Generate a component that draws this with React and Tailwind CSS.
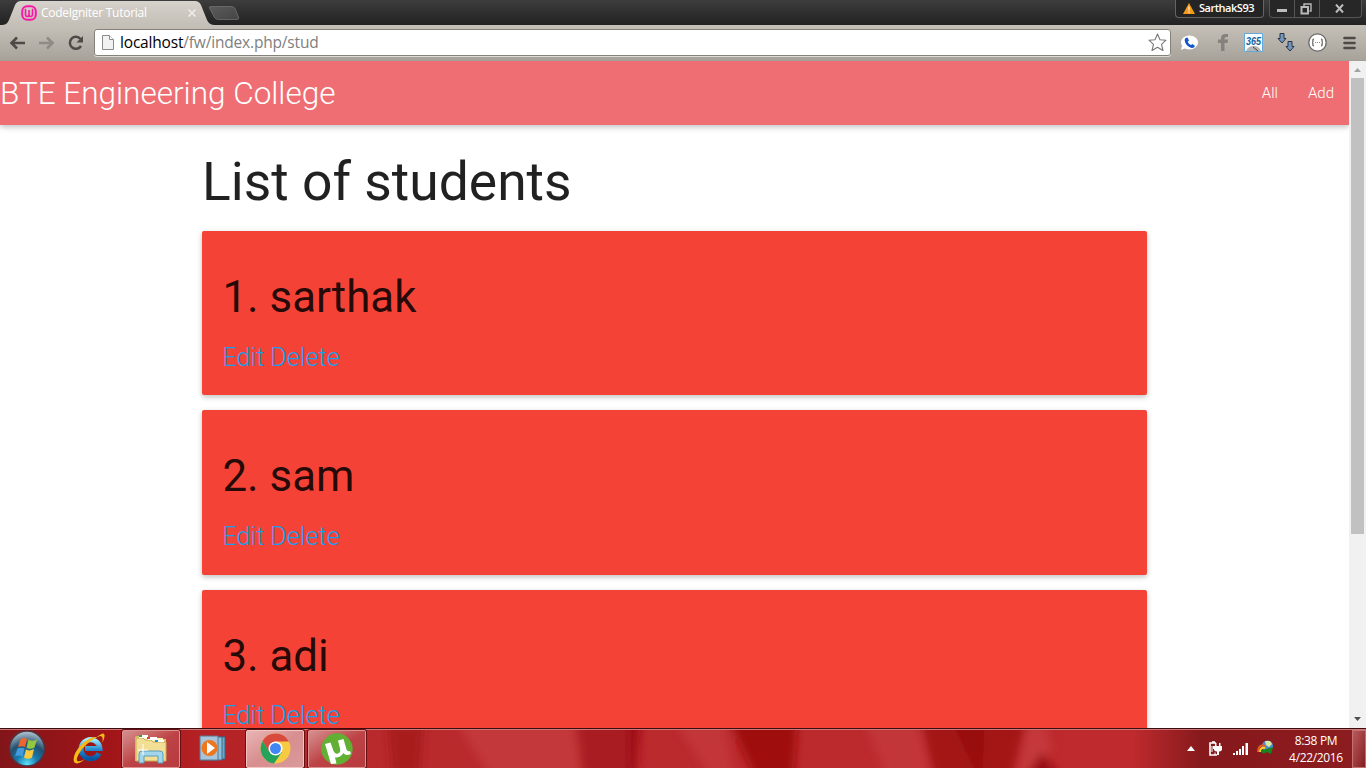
import React from "react";

const students = ["1. sarthak", "2. sam", "3. adi"];

function TabStrip() {
  return (
    <div className="relative h-[25px] shrink-0 bg-gradient-to-b from-[#3d3d3d] to-[#222222]">
      <svg className="absolute left-0 top-0" width="245" height="25" viewBox="0 0 245 25">
        <defs>
          <linearGradient id="tab" x1="0" y1="0" x2="0" y2="1">
            <stop offset="0" stopColor="#d6d2cc" />
            <stop offset="1" stopColor="#c4bfb6" />
          </linearGradient>
          <linearGradient id="newTab" x1="0" y1="0" x2="1" y2="1">
            <stop offset="0" stopColor="#5c5c5c" />
            <stop offset="1" stopColor="#444" />
          </linearGradient>
        </defs>
        <path d="M0 25C6 25 7 24 9 20L15 5Q17 1 21 1H195Q199 1 201 5L207 20Q209 25 215 25Z" fill="url(#tab)" />
        <path d="M210.500 6.500H231Q234 6.500 235 8.500L238.500 17Q239.500 19.500 237 19.500H219Q215.500 19.500 214.500 17.500L209.500 8Q209 6.500 210.500 6.500Z" fill="url(#newTab)" stroke="#777" strokeWidth=".7" />
      </svg>
      <div className="relative flex h-[25px] items-center pl-[21px]">
        <svg width="16" height="16" viewBox="0 0 16 16" fill="none" stroke="#fb16a8">
          <rect x="1.2" y="1.2" width="13.6" height="13.6" rx="5" strokeWidth="2" />
          <path d="M5 4.500H4.500V9.500Q4.500 11.500 6.200 11.500Q8 11.500 8 9.500V5V9.500Q8 11.500 9.800 11.500Q11.500 11.500 11.500 9.500V4.500H11" strokeWidth="1.6" />
        </svg>
        <span className="ml-1 w-[130px] whitespace-nowrap text-[12px] tracking-[-0.28px] text-white">CodeIgniter Tutorial</span>
        <svg className="ml-[16px]" width="10" height="10" viewBox="0 0 10 10"><path d="M1.500 1.500L8.500 8.500M8.500 1.500L1.500 8.500" stroke="#f0eeea" strokeWidth="1.5" /></svg>
      </div>
      <div className="absolute right-[102px] top-0 flex h-[18px] w-[89px] items-center rounded-b border border-t-0 border-[#646464] bg-[#242424] pl-[7px]">
        <svg width="12" height="11" viewBox="0 0 12 11"><path d="M6 0L12 11H0Z" fill="#f39a18" /><path d="M6 3.5V7.5M6 8.5V10" stroke="#fff" /></svg>
        <span className="ml-[4px] whitespace-nowrap text-[11px] font-semibold tracking-[-0.48px] text-white">SarthakS93</span>
      </div>
      <div className="absolute right-[4px] top-0 flex h-[18px] w-[93px] rounded-b border border-t-0 border-[#555] bg-[#272727]">
        <div className="flex w-[25px] items-center justify-center border-r border-[#555]"><div className="mt-[3px] h-[3px] w-[10px] bg-[#bdbdbd]" /></div>
        <div className="flex w-[25px] items-center justify-center border-r border-[#555]">
          <svg className="-translate-x-px" width="12" height="12" viewBox="0 0 12 12" fill="none" stroke="#b9b9b9"><path d="M4 3V1H11V8H9.500" strokeWidth="1.4" /><path d="M1.5 4H8V10.5H1.5Z" strokeWidth="2" /></svg>
        </div>
        <div className="flex flex-1 items-center justify-center"><svg className="-translate-x-px" width="11" height="9" viewBox="0 0 11 9"><path d="M2 .5L9 8.5M9 .5L2 8.5" stroke="#bdbdbd" strokeWidth="2" /></svg></div>
      </div>
    </div>
  );
}

function Toolbar() {
  return (
    <div className="flex h-[36px] shrink-0 items-center border-b border-[#a39e98] bg-gradient-to-b from-[#c5c0b8] to-[#a7a29a] pl-[9px] pr-[10px]">
      <svg width="17" height="14" viewBox="0 0 17 14" fill="none" stroke="#4d4a47" strokeWidth="2.6"><path d="M16 7H3M8 1.5L2.5 7L8 12.5" /></svg>
      <svg className="ml-[13px]" width="17" height="14" viewBox="0 0 17 14" fill="none" stroke="#8f8b85" strokeWidth="2.6"><path d="M0 7H13M8 1.5L13.5 7L8 12.5" /></svg>
      <svg className="ml-[12px]" width="16" height="16" viewBox="0 0 16 16"><path d="M13 11A6 6 0 1 1 12.5 4" fill="none" stroke="#4d4a47" strokeWidth="2.5" /><path d="M15 1V7.5H8.5Z" fill="#4d4a47" /></svg>
      <div className="ml-[10px] flex h-[27px] w-[1077px] items-center rounded-[3px] border border-[#85817b] bg-white pl-[7px] pr-[3px] shadow-[0_1px_0_#dedad4]">
        <svg width="12" height="15" viewBox="0 0 12 15"><path d="M.5 .5H7.5L11.5 4.5V14.5H.5Z" fill="#f2f2f2" stroke="#8b8b8b" /><path d="M7.5 .5V4.5H11.5" fill="#fff" stroke="#8b8b8b" /></svg>
        <span className="ml-[6px] flex-1 font-['Open_Sans','Noto_Sans',sans-serif] text-[15.5px] tracking-[-0.18px] text-[#808080]"><span className="text-black">localhost</span>/fw/index.php/stud</span>
        <svg width="19" height="19" viewBox="0 0 19 19"><path d="M9.5 1L12 6.700L18 7.200L13.500 11.300L15 17.500L9.5 14.200L4 17.5L5.500 11.300L1 7.200L7 6.700Z" fill="#fff" stroke="#777" strokeWidth="1.1" strokeLinejoin="round" /></svg>
      </div>
      <svg className="ml-[9px]" width="19" height="16" viewBox="0 0 19 16"><ellipse cx="9.5" cy="7.5" rx="8.5" ry="7" fill="#fff" /><path d="M2 11L1 15L6 13Z" fill="#fff" /><path d="M5.5 3L7.5 2.5L9 5.5L7.7 6.7Q8.5 9 11 10L12.5 9L15 11Q14 13.5 11.5 13Q5.5 11 4.7 5.5Q4.5 4 5.5 3Z" fill="#1457c8" /></svg>
      <svg className="ml-[19px]" width="11" height="17" viewBox="0 0 11 17"><path d="M3 17V9H0V5.5H3V4Q3 0 8 0H10V3H8Q6.500 3 6.500 5V5.5H10L9.6 9H6.500V17Z" fill="#85817c" /></svg>
      <svg className="ml-[15px]" width="19" height="19" viewBox="0 0 19 19"><path d="M.5 .5H18.5V18.5H.5Z" fill="#f8fbfd" stroke="#62aadb" /><path d="M2 18Q4 13 10 13Q15 13 17 18Z" fill="#b5b5b5" /><path d="M9 14L14 18" stroke="#444" /><text x="9.5" y="11.5" textAnchor="middle" textLength="15" lengthAdjust="spacingAndGlyphs" fontFamily="Liberation Sans, sans-serif" fontSize="11" fontStyle="italic" fontWeight="bold" fill="#1463a0">365</text></svg>
      <svg className="ml-[14px]" width="18" height="19" viewBox="0 0 18 19" fill="#7397bd" stroke="#283444"><path d="M3 .5H7V5.5H9L5 10L1 5.5H3Z" /><path d="M11 8.5H15V13.5H17L13 18L9 13.5H11Z" /></svg>
      <svg className="ml-[13px]" width="19" height="19" viewBox="0 0 19 19"><circle cx="9.5" cy="9.5" r="8.7" fill="#fff" stroke="#666" strokeWidth="1.3" /><path d="M6 6Q4.5 6 5 8Q5 9.5 4 9.5Q5 9.5 5 11Q4.5 13 6 13M13 6Q14.5 6 14 8Q14 9.5 15 9.5Q14 9.5 14 11Q14.5 13 13 13" fill="none" stroke="#555" strokeWidth="1.2" /><path d="M7 9.500H8M9 9.500H10M11 9.500H12" stroke="#888" /></svg>
      <svg className="ml-auto" width="13" height="14" viewBox="0 0 13 14" stroke="#4e4a46" strokeWidth="2.6" strokeLinecap="round"><path d="M1.5 2H11.5M1.5 7H11.5M1.5 12H11.5" /></svg>
    </div>
  );
}

function Page() {
  return (
    <div className="flex min-h-0 flex-1 bg-white font-[Roboto,sans-serif]">
      <main className="w-[1349px] overflow-hidden">
        <nav className="flex h-[64px] items-center justify-between bg-[#ee6e73] pr-[15px] text-white shadow-[0_2px_5px_0_rgba(0,0,0,0.16),0_2px_8px_0_rgba(0,0,0,0.1)]">
          <span className="pt-px text-[31.5px] font-light leading-[64px]">BTE Engineering College</span>
          <div className="flex gap-[30px] text-[15px] font-light"><span>All</span><span>Add</span></div>
        </nav>
        <div className="ml-[202px] w-[945px]">
          <h2 className="mt-[27px] h-[79px] text-[53.4px] leading-[59px] text-black/87">List of students</h2>
          {students.map((name) => (
            <section key={name} className="mb-[15px] h-[164.4px] rounded-[2px] bg-[#f44336] px-[20.5px] pt-[42px] shadow-[0_2px_5px_0_rgba(0,0,0,0.16),0_2px_6px_0_rgba(0,0,0,0.1)]">
              <h3 className="text-[43.8px] leading-[48px] text-black/87">{name}</h3>
              <div className="mt-[18.6px] flex gap-[6px] text-[25.2px] font-light leading-[36px] text-[#189ff0]"><span>Edit</span><span>Delete</span></div>
            </section>
          ))}
        </div>
      </main>
      <div className="flex w-[17px] flex-col items-center bg-[#f1f1f1]">
        <svg width="17" height="17" viewBox="0 0 17 17"><path d="M5 11L8.5 7L12 11Z" fill="#a3a3a3" /></svg>
        <div className="h-[456px] w-[13px] bg-[#c1c1c1]" />
        <svg className="mt-auto" width="17" height="17" viewBox="0 0 17 17"><path d="M5 6L8.5 10L12 6Z" fill="#505050" /></svg>
      </div>
    </div>
  );
}

const Slot = ({ children, bright }) => (
  <div className={bright ? "flex h-[38px] w-[58px] items-center justify-center rounded-[2px] border border-[#f3c5c5] bg-gradient-to-br from-[#e9b5b5] via-[#d88e8f] to-[#d99a9b] shadow-[0_0_0_1px_#651114]" : "flex h-[38px] w-[58px] items-center justify-center rounded-[2px] border border-[#dc9293] bg-gradient-to-br from-[#d58f90] via-[#bd4346] to-[#b83b3e] shadow-[0_0_0_1px_#651114]"}>{children}</div>
);

function Taskbar() {
  return (
    <footer className="relative h-[40px] shrink-0 overflow-hidden border-t border-[#3c0c0e] bg-[#b22024]">
      <svg className="absolute inset-0" width="1366" height="39" viewBox="0 0 1366 39">
        <defs>
          <filter id="soft"><feGaussianBlur stdDeviation="4" /></filter>
          <linearGradient id="barEdge" x1="0" x2="1"><stop offset="0" stopColor="#821519" /><stop offset=".08" stopColor="#a11518" /><stop offset=".15" stopColor="#b52225" /><stop offset=".28" stopColor="#b92a2d" /><stop offset=".83" stopColor="#be2a2d" /><stop offset=".88" stopColor="#85191c" /><stop offset=".95" stopColor="#8a1a1d" /><stop offset="1" stopColor="#8b1d20" /></linearGradient>
        </defs>
        <path d="M0 0H1366V39H0Z" fill="url(#barEdge)" />
        <g filter="url(#soft)">
          <path d="M388 -5H424L420 45H392Z" fill="#a81b1e" />
          <path d="M452 -15H572L582 55H495Z" fill="#c3383a" />
          <path d="M576 -15H640L637 55H585Z" fill="#a91f21" />
          <path d="M628 -15H642L634 55H628Z" fill="#a00f12" />
          <path d="M670 -15H722L736 55H715Z" fill="#c23538" />
          <path d="M726 -15H798L793 55H758Z" fill="#a00d10" />
          <path d="M860 -15H916L934 55H890Z" fill="#c23538" />
          <path d="M920 -15H1028L1010 55H935Z" fill="#a41518" />
          <path d="M948 -15H985L982 55Z" fill="#980b0d" />
          <path d="M1016 50L1028 -5H1045L1052 20L1030 50Z" fill="#c4393b" />
          <path d="M1024 50L1042 24L1062 50Z" fill="#991013" />
        </g>
        <path d="M0 .5H1366" stroke="#cd7779" />
      </svg>
      <div className="relative flex h-[39px] items-center">
        <svg className="ml-[8px]" width="38" height="38" viewBox="0 0 38 38">
          <defs><radialGradient id="orb" cx=".5" cy=".95" r=".9"><stop offset="0" stopColor="#5de3fc" /><stop offset=".35" stopColor="#1978ad" /><stop offset=".65" stopColor="#22506f" /><stop offset="1" stopColor="#a5bac8" /></radialGradient></defs>
          <circle cx="19" cy="18.500" r="17.5" fill="url(#orb)" stroke="#4e3541" strokeWidth="1.5" />
          <path d="M12.500 9.500Q16 7 19 9L17 17Q14 15.500 10 17Z" fill="#ef6530" />
          <path d="M20.500 9.500Q24 12 29 9.500L26.500 17.500Q22 20 18.500 17.500Z" fill="#93c83e" />
          <path d="M9.500 18.500Q13 17 16.500 18.500L14.500 26.500Q11 24.500 7 26.500Z" fill="#4599dd" />
          <path d="M18 19.500Q22 21.500 26 19L24 27.500Q20 30 16 27.500Z" fill="#fbc93c" />
        </svg>
        <svg className="ml-[27px]" width="33" height="34" viewBox="0 0 33 34">
          <defs><linearGradient id="ie" x1="0" y1="0" x2="0" y2="1"><stop offset="0" stopColor="#9cebff" /><stop offset=".5" stopColor="#268ed1" /><stop offset="1" stopColor="#0654a4" /></linearGradient></defs>
          <path d="M26 21.500A9.500 9.500 0 1 1 27 16.500H12" fill="none" stroke="url(#ie)" strokeWidth="5" />
          <path d="M24 5Q31 -1 31.500 3Q32 6 29 11Q31 4 27 4Q18 7 9 17Q2 27 4.500 29Q7 30 12 27Q4 34 1 30Q-1 23 8 13Q17 4 24 5Z" fill="#f6b918" />
        </svg>
        <div className="ml-[16px]"><Slot><svg width="34" height="32" viewBox="0 0 34 32"><path d="M1 5Q1 3 3 3H11L13 6H32V28H1Z" fill="#dec66d" /><path d="M3 5H29V26H3Z" fill="#fff7bc" /><path d="M2 5V28H32V9H19L17 7H11L9 5Z" fill="#f2df93" stroke="#c5ac58" /><path d="M5 2H14V5H5ZM14 4H23V7H14ZM21 7H30V9H21Z" fill="#fff" /><path d="M5 2H8V4H5Z" fill="#32a72d" /><path d="M13 4H16V6H13Z" fill="#d84733" /><path d="M21 7H24V9H21Z" fill="#278be0" /><path d="M5 30V21Q5 18 8 18H26Q29 18 29 21V30H24V23H10V30Z" fill="#a3d5ec" stroke="#5b9dbb" /><path d="M9 11V22M4 17H14" stroke="#fff" /></svg></Slot></div>
        <svg className="ml-[19px]" width="27" height="27" viewBox="0 0 27 27"><path d="M7 2H26V24H7Z" fill="#6ba7c9" stroke="#35698b" /><path d="M3 2H23V25H3Z" fill="#8ebfdb" stroke="#406d8b" /><path d="M1 1H19V25H1Z" fill="#a9c4da" stroke="#567990" /><circle cx="10.5" cy="13" r="8" fill="#ee761c" /><path d="M8 7V19L16 13Z" fill="#fff" /></svg>
        <div className="ml-[20px]"><Slot bright><svg width="31" height="31" viewBox="0 0 31 31"><circle cx="15.5" cy="15.5" r="15" fill="#f6cb42" /><path d="M2.6 8A15 15 0 0 1 28.8 8.5H15.5L9.5 19.5Z" fill="#d84a3e" /><path d="M2.6 8A15 15 0 0 0 14 30.5L22 19H9.5Z" fill="#24a35a" /><circle cx="15.5" cy="15.5" r="7" fill="#fff" /><circle cx="15.5" cy="15.5" r="5.5" fill="#4285f4" /></svg></Slot></div>
        <div className="ml-[4px]"><Slot><svg width="32" height="32" viewBox="0 0 32 32"><circle cx="16" cy="16" r="15.7" fill="#61b033" /><path d="M4 11L9.500 9.500L12.500 18Q14 21.500 17 20.500Q20 19.500 19 15.500L17 7.500L22.500 6L25.500 16.500Q26.500 19 29 18L30 21Q24.500 23.500 22.500 20Q19 25 14 24.500L15.500 30.500L10 31Z" fill="#fff" /></svg></Slot></div>
        <div className="ml-auto flex items-center">
          <svg width="8" height="5" viewBox="0 0 8 5"><path d="M4 0L8 5H0Z" fill="#fff" /></svg>
          <svg className="ml-[13px]" width="15" height="16" viewBox="0 0 15 16"><path d="M8 2H2V14H9M4 1H7" fill="none" stroke="#fff" strokeWidth="1.6" /><path d="M5 5H14V8Q14 10.500 11 10.500V14H9V10.500Q6 10.500 6 8H5ZM7 2H8.500V5H7ZM11 2H12.500V5H11Z" fill="#fff" /><path d="M4 5V11M7 11.500V14" stroke="#fff" /></svg>
          <svg className="ml-[10px]" width="16" height="12" viewBox="0 0 16 12" fill="#fff"><path d="M0 10H2V12H0ZM3 8H5V12H3ZM6 6H8V12H6ZM9 3H11V12H9ZM12.500 0H15V12H12.500Z" /></svg>
          <svg className="ml-[8px]" width="17" height="17" viewBox="0 0 17 17"><circle cx="10.500" cy="6" r="5.500" fill="#4d8fd2" /><path d="M8 1L13 1L15 4L12 7L9 5Z" fill="#d9e8a5" /><path d="M1 12Q1 4 8 6" fill="none" stroke="#e85b22" strokeWidth="2" /><path d="M3 12Q3 7 8 8" fill="none" stroke="#f4d927" strokeWidth="2" /><path d="M4 10.500L9 9L16 7L14 14L10 12Q5 15 4 10.500Z" fill="#188522" /></svg>
          <div className="ml-[13px] w-[58px] whitespace-nowrap text-center text-[12px] leading-[17px] tracking-[-0.34px] text-white"><div>8:38 PM</div><div>4/22/2016</div></div>
          <div className="ml-[7px] h-[38px] w-[14px] border border-[#c47073] bg-gradient-to-br from-[#b85a5d] to-[#861b1e]" />
        </div>
      </div>
    </footer>
  );
}

export default function App() {
  return (
    <div className="flex h-[768px] w-[1366px] flex-col overflow-hidden font-['Open_Sans','Noto_Sans',sans-serif]">
      <TabStrip />
      <Toolbar />
      <Page />
      <Taskbar />
    </div>
  );
}
